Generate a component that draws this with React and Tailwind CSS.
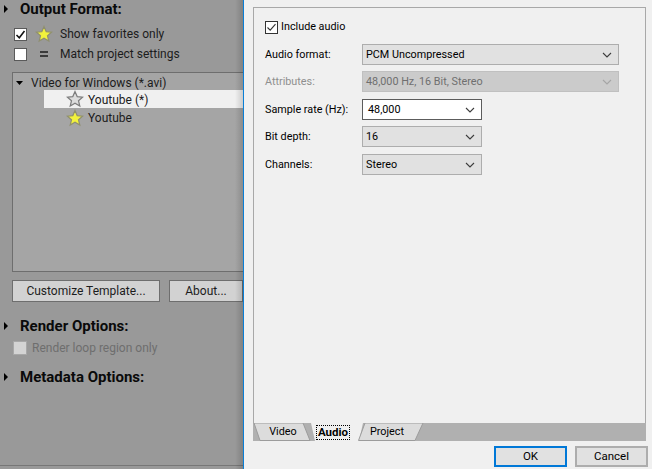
const Star = ({ filled }) => (
  <svg width="18" height="18" viewBox="0 0 18 18" className="shrink-0">
    <polygon
      points="9,1.5 11.2,6.6 16.6,7.1 12.5,10.7 13.8,16 9,13.2 4.2,16 5.5,10.7 1.4,7.1 6.8,6.6"
      fill={filled ? '#f2f23c' : '#dcdcdc'}
      stroke={filled ? '#8f8f70' : '#7d7d7d'}
      strokeWidth="1.2"
    />
  </svg>
);

const Caret = ({ open }) => (
  <svg width="7" height="8" viewBox="0 0 7 8" className="shrink-0">
    {open ? <polygon points="0,2 7,2 3.5,6" fill="#000" /> : <polygon points="1,0 5,4 1,8" fill="#000" />}
  </svg>
);

const Chevron = ({ color = '#3c3c3c' }) => (
  <svg width="10" height="6" viewBox="0 0 10 6" className="shrink-0">
    <path d="M1 1l4 4 4-4" fill="none" stroke={color} strokeWidth="1.1" />
  </svg>
);

function Section({ title, className = '' }) {
  return (
    <div className={`flex items-center ${className}`}>
      <div className="w-[20px] pl-[3px]">
        <Caret />
      </div>
      <span className="text-[15px] font-bold text-[#0a0a0a]">{title}</span>
    </div>
  );
}

function Select({ value, width, active, disabled }) {
  const look = active
    ? 'bg-white border-[#5c5c5c] text-black'
    : disabled
      ? 'bg-[#cbcbcb] border-[#c0c0c0] text-[#6f6f6f]'
      : 'bg-[#e1e1e1] border-[#adadad] text-black';
  return (
    <div className={`flex h-[21px] items-center justify-between border pr-[6px] pl-[3px] ${width} ${look}`}>
      <span className={`mt-[1px] ${active ? 'pl-[2px]' : ''}`}>{value}</span>
      <Chevron color={disabled ? '#a5a5a5' : '#3c3c3c'} />
    </div>
  );
}

function Field({ label, disabled, className = '', children }) {
  return (
    <div className={`flex items-center ${className}`}>
      <span className={`mt-[1px] w-[97px] ${disabled ? 'text-[#8f8f8f]' : 'text-black'}`}>{label}</span>
      {children}
    </div>
  );
}

function Tab({ label, points, width, active, className = '' }) {
  return (
    <div className={`relative flex h-[18px] items-center justify-center ${width} ${className}`}>
      <svg width="100%" height="18" className="absolute inset-0">
        <polygon
          points={points}
          fill={active ? '#f0f0f0' : '#dcdcdc'}
          stroke={active ? 'none' : '#9c9c9c'}
        />
      </svg>
      {active ? (
        <span className="relative border border-dotted border-black px-[1px] text-[11.5px] leading-[13px] font-bold">{label}</span>
      ) : (
        <span className="relative">{label}</span>
      )}
    </div>
  );
}

export default function App() {
  return (
    <div
      className="flex h-[469px] w-[652px] overflow-hidden text-[12px] text-black"
      style={{ fontFamily: 'Roboto, "Noto Sans", sans-serif' }}
    >
      <div className="relative flex w-[244px] shrink-0 flex-col overflow-hidden border-r border-[#0a7fd6] bg-[#999999] text-[#1c1c1c]">
        <Section title="Output Format:" className="h-[18px]" />
        <div className="mt-[6px] flex h-[20px] items-center pl-[14px]">
          <div className="flex h-[13px] w-[13px] items-center justify-center border border-[#5a5a5a] bg-white">
            <svg width="11" height="11" viewBox="0 0 11 11">
              <path d="M1.5 6l2.8 2.8L9.5 2" fill="none" stroke="#111" strokeWidth="1.6" />
            </svg>
          </div>
          <div className="ml-[8px]"><Star filled /></div>
          <span className="ml-[7px]">Show favorites only</span>
        </div>
        <div className="flex h-[20px] items-center pl-[14px]">
          <div className="h-[13px] w-[13px] border border-[#5a5a5a] bg-white" />
          <div className="ml-[13px] flex w-[14px] flex-col gap-[2px]">
            <div className="h-[2px] w-[8px] bg-[#3a3a3a]" />
            <div className="h-[2px] w-[8px] bg-[#3a3a3a]" />
          </div>
          <span className="ml-[6px]">Match project settings</span>
        </div>
        <div className="mt-[8px] ml-[12px] flex h-[200px] w-[240px] shrink-0 flex-col border border-[#6e6e6e] bg-[#a5a5a5] pt-[1px]">
          <div className="flex h-[16px] items-center pt-[2px] pl-[3px]">
            <Caret open />
            <span className="ml-[8px]">Video for Windows (*.avi)</span>
          </div>
          <div className="ml-[31px] flex h-[18px] items-center bg-[#f0f0f0] pl-[22px]">
            <Star />
            <span className="mt-[1px] ml-[4px]">Youtube (*)</span>
          </div>
          <div className="ml-[31px] flex h-[19px] items-center pl-[22px]">
            <Star filled />
            <span className="ml-[4px]">Youtube</span>
          </div>
        </div>
        <div className="mt-[8px] flex pl-[12px]">
          <div className="flex h-[22px] w-[148px] items-center justify-center border border-[#6e6e6e] bg-[#d2d2d2]">
            Customize Template...
          </div>
          <div className="ml-[9px] flex h-[22px] w-[74px] items-center justify-center border border-[#6e6e6e] bg-[#d2d2d2]">
            About...
          </div>
        </div>
        <Section title="Render Options:" className="mt-[15px] h-[18px]" />
        <div className="mt-[5px] flex h-[16px] items-center pl-[13px] text-[#6e6e6e]">
          <div className="h-[14px] w-[14px] border border-[#a8a8a8] bg-[#d4d4d4]" />
          <span className="ml-[5px]">Render loop region only</span>
        </div>
        <Section title="Metadata Options:" className="mt-[12px] h-[18px]" />
        <div className="mt-auto mb-[3px] h-[1px] bg-[#777777]" />
        <div className="absolute inset-y-0 right-0 w-[8px] bg-gradient-to-r from-transparent to-black/15" />
      </div>

      <div className="flex flex-1 flex-col bg-[#f0f0f0] pt-[7px] pr-[6px] pl-[9px] text-[10.8px]">
        <div className="flex h-[416px] w-[393px] shrink-0 flex-col border-x border-t border-[#a8a8a8] pt-[11px] pl-[11px]">
          <label className="flex h-[16px] items-center">
            <div className="flex h-[13px] w-[13px] items-center justify-center border border-[#333] bg-white">
              <svg width="11" height="11" viewBox="0 0 11 11">
                <path d="M1.5 5.5l2.7 2.7L9.5 2.2" fill="none" stroke="#333" strokeWidth="1.1" />
              </svg>
            </div>
            <span className="mt-[1px] ml-[3px]">Include audio</span>
          </label>
          <Field label="Audio format:" className="mt-[9px]">
            <Select value="PCM Uncompressed" width="w-[257px]" />
          </Field>
          <Field label="Attributes:" disabled className="mt-[6px]">
            <Select value="48,000 Hz, 16 Bit, Stereo" width="w-[257px]" disabled />
          </Field>
          <Field label="Sample rate (Hz):" className="mt-[7px]">
            <Select value="48,000" width="w-[120px]" active />
          </Field>
          <Field label="Bit depth:" className="mt-[6px]">
            <Select value="16" width="w-[120px]" />
          </Field>
          <Field label="Channels:" className="mt-[7px]">
            <Select value="Stereo" width="w-[120px]" />
          </Field>
        </div>
        <div className="flex h-[18px] w-[393px] shrink-0 bg-[#b0b0b0]">
          <Tab label="Video" width="w-[58px] pl-[2px]" points="1,0 50,0 57,17.5 7,17.5" />
          <Tab label="Audio" width="w-[53px] pr-[9px]" points="0,0 52,0 48,18 4,18" active />
          <Tab label="Project" width="w-[66px] pr-[8px]" className="-ml-[6px]" points="7,0 65,0 57,17.5 0.5,17.5" />
        </div>
        <div className="mt-[5px] -mr-[2px] flex justify-end gap-[8px] text-[11.5px]">
          <div className="flex h-[21px] w-[73px] items-center justify-center border-2 border-[#0078d7] bg-[#e1e1e1]">
            OK
          </div>
          <div className="flex h-[21px] w-[73px] items-center justify-center border-2 border-[#adadad] bg-[#e1e1e1]">
            Cancel
          </div>
        </div>
      </div>
    </div>
  );
}
